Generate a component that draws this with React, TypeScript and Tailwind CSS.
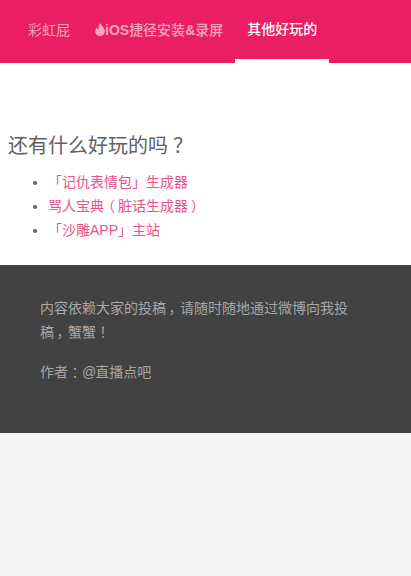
import type { ReactNode } from 'react'

const FONT = '[font-family:"Liberation_Sans","Noto_Sans_CJK_SC",sans-serif]'

// the reference centres full-width punctuation in its box
function Mark({ children }: { children: ReactNode }) {
  return <span className='inline-block w-[1em] text-center [font-feature-settings:"palt"]'>{children}</span>
}

function Flame() {
  return (
    <svg width="10" height="13" viewBox="0 0 10 13" className="inline-block -mt-[2px] align-middle" fill="currentColor">
      <path d="M5.500 0C6 2.500 9.800 4.600 9.800 8.200 9.800 11 7.600 13 5 13S.2 11 .2 8.400C.2 6.600 1.200 5.200 2.200 4.200c.1 1.200.6 2 1.400 2.400C3.200 4.200 3.800 1.800 5.500 0z" />
    </svg>
  )
}

export default function App() {
  return (
    <div className={`${FONT} min-h-[576px] bg-[#f5f5f5] text-[#616161]`}>
      <nav className="flex h-[63px] bg-[#e91e63] pl-[12px] text-[14px]">
        <a className="flex items-center px-[16px] pb-[3px] text-[#f8a5c2]">彩虹屁</a>
        <a className="flex items-center px-[9px] pb-[3px] font-medium text-[#f8a5c2]">
          <Flame /><span className="font-bold">iOS</span>捷径安装<span className="font-bold">&amp;</span>录屏
        </a>
        <a className="ml-[3px] flex items-center border-b-[4px] border-white px-[12px] font-medium text-white">其他好玩的</a>
      </nav>

      <main className="h-[202px] bg-white px-[8px] pt-[69px]">
        <h2 className="text-[20px] leading-[28px] font-normal">
          还有什么好玩的吗<Mark>？</Mark>
        </h2>
        <ul className="mt-[10px] list-disc pl-[40px] text-[14px] leading-[24px]">
          <li><a className="text-[#e9528a]">「记仇表情包」生成器</a></li>
          <li>
            <a className="text-[#e9528a]">
              骂人宝典<Mark>（</Mark>脏话生成器<Mark>）</Mark>
            </a>
          </li>
          <li><a className="text-[#e9528a]">「沙雕APP」主站</a></li>
        </ul>
      </main>

      <footer className="h-[168px] bg-[#424242] px-[40px] pt-[31px] text-[14px] leading-[24px] text-[#a6a6a6]">
        <p>
          内容依赖大家的投稿<Mark>，</Mark>请随时随地通过微博向我投<br />
          稿<Mark>，</Mark>蟹蟹<Mark>！</Mark>
        </p>
        <p className="mt-[16px]">作者<Mark>：</Mark><span className="tracking-[-1px]">@</span>直播点吧</p>
      </footer>
    </div>
  )
}
